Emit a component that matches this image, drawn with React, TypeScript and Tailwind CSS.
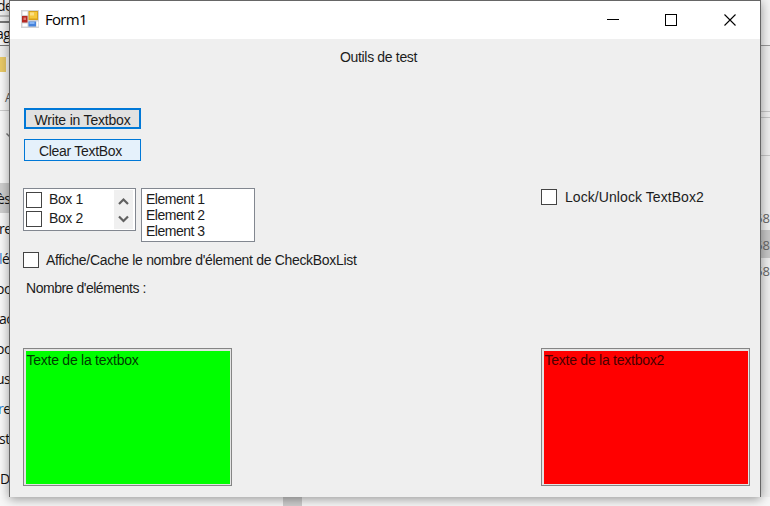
import type { ReactNode } from 'react';

function Box({ className = '' }: { className?: string }) {
  return <span className={`block size-4 shrink-0 border-[1.5px] border-[#444] bg-white ${className}`} />;
}

function Label({ children, className = '' }: { children: ReactNode; className?: string }) {
  return <span className={`block whitespace-pre leading-4 ${className}`}>{children}</span>;
}

function FormIcon() {
  return (
    <svg width="18" height="18" viewBox="0 0 18 18" className="block shrink-0">
      <rect width="18" height="18" fill="#d2d2d4" />
      <rect x="1.5" y="1.5" width="5" height="3.5" fill="#fff" />
      <rect x="1.5" y="13.5" width="5" height="3" fill="#fff" />
      <rect x="15.5" y="11.5" width="1.8" height="5" fill="#fff" />
      <rect x="1" y="6" width="5.5" height="6.5" fill="#b62822" />
      <rect x="2.5" y="7.5" width="2.5" height="2.5" fill="#dd7a70" />
      <rect x="7.5" y="1" width="9.5" height="9" fill="#d7a11c" />
      <rect x="8.5" y="2" width="7.5" height="6.5" fill="#f5c83c" />
      <rect x="9" y="2.5" width="4" height="3" fill="#fbdf86" />
      <rect x="7.5" y="11.5" width="7.5" height="5" fill="#4683dc" />
      <rect x="8.5" y="12" width="5" height="2" fill="#86b5f5" />
    </svg>
  );
}

function Background() {
  return (
    <div className="flex h-[506px] w-[770px] flex-col overflow-hidden bg-[#f8f8f8] font-['Open_Sans','Noto_Sans',sans-serif] text-[14px] text-[#111]">
      <div className="flex h-[497px] justify-between">
        <div className="flex w-[10px] flex-col whitespace-pre tracking-[-0.5px]">
          <div className="h-[15px] bg-[#eee] leading-[11px] -indent-[3px]">de</div>
          <div className="h-2 border-y-2 border-t-[#bbb] border-b-[#777] bg-[#eee]" />
          <div className="h-[22px] bg-[#f4f4f4] leading-[21px] -indent-[4px]">ag</div>
          <div className="h-[12px] border-t border-[#777] bg-[#eee]" />
          <div className="h-[15px] w-[6px] bg-[#e9c967]" />
          <div className="h-[17px]" />
          <div className="h-[22px] border-b border-[#ccc] indent-[5px] text-[12px] leading-[18px] text-[#555]">A</div>
          <svg className="mt-[18px] ml-[5px] block shrink-0" width="10" height="10" viewBox="0 0 10 10">
            <path d="M1.5 4.5 5 8l4-4" fill="none" stroke="#777" strokeWidth="1.4" />
          </svg>
          <div className="h-[44px] shrink-0" />
          <div className="h-[30px] shrink-0 bg-[#cecece] leading-[31px] -indent-[3px]">ès</div>
          <div className="h-[30px] shrink-0 leading-[31px] -indent-px">re</div>
          <div className="h-[30px] shrink-0 leading-[31px] -indent-px"><span className="text-[#2b7cd3]">l</span>é</div>
          <div className="h-[30px] shrink-0 leading-[31px] -indent-[4px]">oc</div>
          <div className="h-[30px] shrink-0 leading-[31px] -indent-[1px]">ac</div>
          <div className="h-[30px] shrink-0 leading-[31px] -indent-[4px]">oc</div>
          <div className="h-[30px] shrink-0 leading-[31px] -indent-[4px]">us</div>
          <div className="h-[30px] shrink-0 leading-[31px] -indent-[2px]"><span className="text-[#2b7cd3]">r</span>e</div>
          <div className="h-[40px] shrink-0 leading-[31px] -indent-px">st</div>
          <div className="h-[34px] shrink-0 leading-[31px]">D</div>
        </div>
        <div className="flex w-[9px] flex-col overflow-hidden bg-[#eee] text-[13px] text-[#666]">
          <div className="h-[46px] shrink-0 border-b border-[#999] bg-[#f3f3f3]" />
          <div className="h-[66px] shrink-0 border-b border-[#c5c5c5]" />
          <div className="h-[6px] shrink-0 border-b border-[#c5c5c5]" />
          <div className="h-[38px] shrink-0 border-b border-[#c5c5c5]" />
          <div className="h-[47px] shrink-0" />
          <div className="h-[27px] shrink-0 leading-[30px] -indent-[6px]">68</div>
          <div className="h-[28px] shrink-0 bg-[#c6c6c6] leading-[30px] -indent-[6px]">68</div>
          <div className="h-[27px] shrink-0 leading-[27px] -indent-[6px]">68</div>
        </div>
      </div>
      <div className="flex h-[9px] bg-[#f7f7f7]">
        <div className="ml-[283px] h-full w-[19px] bg-[#cdcdcd]" />
      </div>
    </div>
  );
}

function TitleBar() {
  return (
    <header className="flex h-[38px] items-start bg-white pl-[11px]">
      <div className="pt-[9px]"><FormIcon /></div>
      <span className="ml-[6px] pt-[8px] font-['Open_Sans',sans-serif] text-[15px] leading-5 tracking-[-0.7px] text-black">Form1</span>
      <svg className="mr-[10px] ml-auto block" width="160" height="38" viewBox="0 0 160 38" fill="none" stroke="#000" shapeRendering="crispEdges">
        <path d="M17 18.5h12" />
        <rect x="75.5" y="13.5" width="11" height="11" />
        <path d="m134.500 13.500 11 11m0-11-11 11" shapeRendering="auto" strokeWidth="1.1" />
      </svg>
    </header>
  );
}

function TextArea({ text, fill }: { text: string; fill: string }) {
  return (
    <div className="h-[138px] w-[209px] border border-[#858585] bg-[#e4e4e4] p-[1.500px]">
      <div className={`h-full pt-px pl-px ${fill}`}>
        <Label className="tracking-[-0.25px]">{text}</Label>
      </div>
    </div>
  );
}

export default function App() {
  return (
    <div className="relative h-[506px] w-[770px] overflow-hidden">
      <Background />
      <main className="absolute top-0 left-[9px] flex h-[497px] w-[752px] flex-col border-x border-t border-[#666] bg-[#efefef] font-['Liberation_Sans',Arial,sans-serif] text-[14px] text-[#1c1c1c] shadow-[0_2px_10px_rgba(0,0,0,0.4)]">
        <TitleBar />
        <Label className="mt-[10px] ml-[330px] tracking-[-0.33px]">Outils de test</Label>
        <button className="mt-[43px] ml-[14px] block h-[21px] w-[117px] border-2 border-[#0078d7] bg-[#e1e1e1]">
          <Label className="mt-[2px] tracking-[-0.2px]">Write in Textbox</Label>
        </button>
        <button className="mt-[10px] ml-[14px] block h-[22px] w-[117px] border border-[#0078d7] bg-[#e5f1fb]">
          <Label className="mt-[2px] -ml-1 tracking-[-0.3px]">Clear TextBox</Label>
        </button>
        <div className="mt-[27px] flex h-[54px] items-start pl-[13px]">
          <div className="flex h-[43px] w-[113px] justify-between border border-[#828790] bg-white p-[2px]">
            <div className="flex flex-col gap-[3px]">
              <div className="flex gap-[7px] pt-px"><Box /><Label className="-mt-px tracking-[-0.4px]">Box 1</Label></div>
              <div className="flex gap-[7px]"><Box /><Label className="-mt-px tracking-[-0.4px]">Box 2</Label></div>
            </div>
            <svg className="-mt-px block bg-[#f0f0f0]" width="19" height="39" viewBox="0 0 19 39" fill="none" stroke="#606060" strokeWidth="2.200">
              <path d="m5 14 4.500-4.500 4.500 4.500M5 26.500l4.500 4.500 4.500-4.500" />
            </svg>
          </div>
          <div className="ml-[5px] h-[54px] w-[114px] border border-[#828790] bg-white pt-[2px] pl-1 tracking-[-0.5px]">
            <Label>Element 1</Label>
            <Label>Element 2</Label>
            <Label>Element 3</Label>
          </div>
          <div className="ml-[286px] flex gap-[8px] pt-px"><Box /><Label className="tracking-[0.07px]">Lock/Unlock TextBox2</Label></div>
        </div>
        <div className="mt-[10px] flex gap-[7px] pl-[13px]"><Box /><Label className="tracking-[-0.32px]">Affiche/Cache le nombre d'élement de CheckBoxList</Label></div>
        <Label className="mt-[12px] ml-[16px] tracking-[-0.47px]">Nombre d'eléments :</Label>
        <div className="mt-[52px] flex justify-between pr-[10px] pl-[13px]">
          <TextArea text="Texte de la textbox" fill="bg-[#00ff00] text-[#003b00]" />
          <TextArea text="Texte de la textbox2" fill="bg-[#ff0000] text-[#480000]" />
        </div>
      </main>
    </div>
  );
}
